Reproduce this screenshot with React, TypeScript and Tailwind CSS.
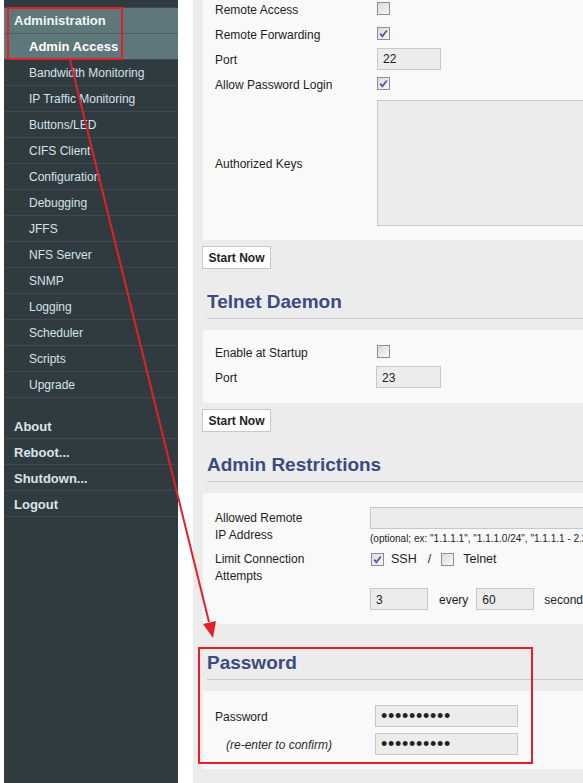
import React from "react";

const subItems = [
  "Bandwidth Monitoring",
  "IP Traffic Monitoring",
  "Buttons/LED",
  "CIFS Client",
  "Configuration",
  "Debugging",
  "JFFS",
  "NFS Server",
  "SNMP",
  "Logging",
  "Scheduler",
  "Scripts",
  "Upgrade",
];

const bottomItems = ["About", "Reboot...", "Shutdown...", "Logout"];

function Check({ checked }: { checked?: boolean }) {
  return (
    <span className="relative inline-block w-[13px] h-[13px] shrink-0 border border-[#8e8f8f] bg-gradient-to-br from-[#dcdcdc] to-[#f7f7f7]">
      {checked && (
        <svg className="absolute inset-0" width="11" height="11" viewBox="0 0 11 11">
          <path d="M2.2 5.6 L4.4 8.3 L8.8 2.4" fill="none" stroke="#4b5a9c" strokeWidth="1.7" />
        </svg>
      )}
    </span>
  );
}

function Field({ value, w, dots }: { value: string; w: string; dots?: boolean }) {
  return (
    <div className={`${w} h-[22px] shrink-0 bg-[#ececec] border border-[#c8c8c8] flex items-center pl-[5px] text-[12px] text-[#222]`}>
      {dots ? <span className="text-[18px] leading-none tracking-[0.7px] -mt-[1px]">{value}</span> : <span className="pt-[1px]">{value}</span>}
    </div>
  );
}

function Row({ label, col, children }: { label: React.ReactNode; col: string; children: React.ReactNode }) {
  return (
    <div className="h-[25px] flex items-center">
      <div className={`${col} shrink-0 pt-[2px]`}>{label}</div>
      {children}
    </div>
  );
}

function StartNow() {
  return (
    <button className="mt-[6px] w-[69px] h-[23px] bg-white border border-[#c8c8c8] text-[12px] font-bold text-[#222] -ml-[1px] block">
      Start Now
    </button>
  );
}

function Heading({ children, mt }: { children: React.ReactNode; mt: string }) {
  return (
    <h2 className={`${mt} ml-[4px] pt-[1px] pb-[5px] border-b border-[#c8c8c8] text-[19px] leading-[22px] font-bold text-[#3c4b7f]`}>
      {children}
    </h2>
  );
}

export default function App() {
  return (
    <div className="relative w-[583px] h-[783px] overflow-hidden flex bg-white font-['Liberation_Sans',Arial,sans-serif] text-[12px] text-[#1e1e1e]">
      {/* sidebar */}
      <nav className="ml-[4px] w-[174px] shrink-0 bg-[#303b40] pt-[7px]">
        <div className="border-t border-[#3e4a4f]">
          <div className="h-[26px] pt-[1px] border-b border-[#4d5e63] bg-[#5e777b] flex items-center pl-[10px] text-[13px] font-bold text-[#f2f6f6]">
            Administration
          </div>
          <div className="h-[26px] pt-[1px] border-b border-[#3e4a4f] bg-[#5e777b] flex items-center pl-[25px] text-[13px] font-bold text-white">
            Admin Access
          </div>
          {subItems.map((s) => (
            <div key={s} className="h-[26px] pt-[1px] border-b border-[#3e4a4f] flex items-center pl-[25px] text-[12px] text-[#d2e3ec]">
              {s}
            </div>
          ))}
        </div>
        <div className="mt-[15px]">
          {bottomItems.map((s) => (
            <div key={s} className="h-[26px] pt-[2px] border-b border-[#3e4a4f] flex items-center pl-[10px] text-[13px] font-bold text-[#d6e6ee]">
              {s}
            </div>
          ))}
        </div>
      </nav>

      {/* main */}
      <main className="ml-[15px] flex-1 min-w-0 bg-[#ececec] overflow-hidden">
        <div className="w-[560px] pl-[10px]">
          {/* SSH daemon, scrolled past its top */}
          <div className="bg-[#f9f9f9] pl-[12px] pb-[14px]">
            <div className="-mt-[4px]">
              <Row label="Remote Access" col="w-[162px]"><Check /></Row>
              <Row label="Remote Forwarding" col="w-[162px]"><Check checked /></Row>
              <Row label="Port" col="w-[162px]"><Field value="22" w="w-[64px]" /></Row>
              <Row label="Allow Password Login" col="w-[162px]"><Check checked /></Row>
            </div>
            <div className="mt-[4px] h-[126px] flex items-center">
              <div className="w-[162px] shrink-0 pt-[1px]">Authorized Keys</div>
              <div className="w-[300px] h-[126px] bg-[#ececec] border border-[#c8c8c8]" />
            </div>
          </div>
          <StartNow />

          <Heading mt="mt-[21px]">Telnet Daemon</Heading>
          <div className="mt-[11px] bg-[#f9f9f9] pl-[12px] pt-[9px] pb-[13px]">
            <Row label="Enable at Startup" col="w-[162px]"><Check /></Row>
            <div className="h-[26px] flex items-center">
              <div className="w-[161px] shrink-0 pt-[2px]">Port</div>
              <Field value="23" w="w-[65px]" />
            </div>
          </div>
          <StartNow />

          <Heading mt="mt-[21px]">Admin Restrictions</Heading>
          <div className="mt-[11px] bg-[#f9f9f9] pl-[12px] pt-[14px] pb-[14px]">
            <div className="flex">
              <div className="w-[155px] shrink-0 leading-[17px] pt-[3px]">
                Allowed Remote
                <br />
                IP Address
              </div>
              <div>
                <div className="w-[260px] h-[22px] bg-[#ececec] border border-[#c8c8c8]" />
                <div className="mt-[3px] text-[10px] leading-[14px] whitespace-nowrap text-[#222]">
                  (optional; ex: "1.1.1.1", "1.1.1.0/24", "1.1.1.1 - 2.2.2.2" or "me.example.com")
                </div>
              </div>
            </div>
            <div className="mt-[3px] flex">
              <div className="w-[155px] shrink-0 leading-[17px] pt-[2px]">
                Limit Connection
                <br />
                Attempts
              </div>
              <div className="h-[20px] flex items-center text-[12.5px]">
                <span className="ml-[1px] flex"><Check checked /></span>
                <span className="ml-[7px] pt-[1px]">SSH</span>
                <span className="ml-[11px] pt-[1px]">/</span>
                <span className="ml-[10px] flex"><Check /></span>
                <span className="ml-[9px] pt-[1px]">Telnet</span>
              </div>
            </div>
            <div className="mt-[3px] flex items-center">
              <div className="w-[155px] shrink-0" />
              <Field value="3" w="w-[58px]" />
              <span className="ml-[11px] pt-[2px]">every</span>
              <span className="ml-[8px]"><Field value="60" w="w-[58px]" /></span>
              <span className="ml-[10px] pt-[2px] whitespace-nowrap">seconds</span>
            </div>
          </div>

          <Heading mt="mt-[27px]">Password</Heading>
          <div className="mt-[11px] bg-[#f9f9f9] pl-[12px] pt-[14px] pb-[14px] flex flex-col gap-[6px]">
            <div className="h-[22px] flex items-center">
              <div className="w-[160px] shrink-0 pt-[2px]">Password</div>
              <Field value="••••••••••" w="w-[143px]" dots />
            </div>
            <div className="h-[22px] flex items-center">
              <div className="w-[160px] shrink-0 pl-[11px] pt-[2px] italic text-[#2a2a2a]">(re-enter to confirm)</div>
              <Field value="••••••••••" w="w-[143px]" dots />
            </div>
          </div>
        </div>
      </main>

      {/* red annotation overlay */}
      <svg className="absolute inset-0 pointer-events-none" width="583" height="783" viewBox="0 0 583 783">
        <rect x="8" y="8" width="114" height="51" fill="none" stroke="#e3202a" strokeWidth="2" />
        <rect x="199" y="648" width="333" height="115" fill="none" stroke="#e3202a" strokeWidth="2" />
        <line x1="70" y1="60" x2="209" y2="622" stroke="#e3202a" strokeWidth="2" />
        <polygon points="213,638 203,624 216,621" fill="#e3202a" />
      </svg>
    </div>
  );
}
